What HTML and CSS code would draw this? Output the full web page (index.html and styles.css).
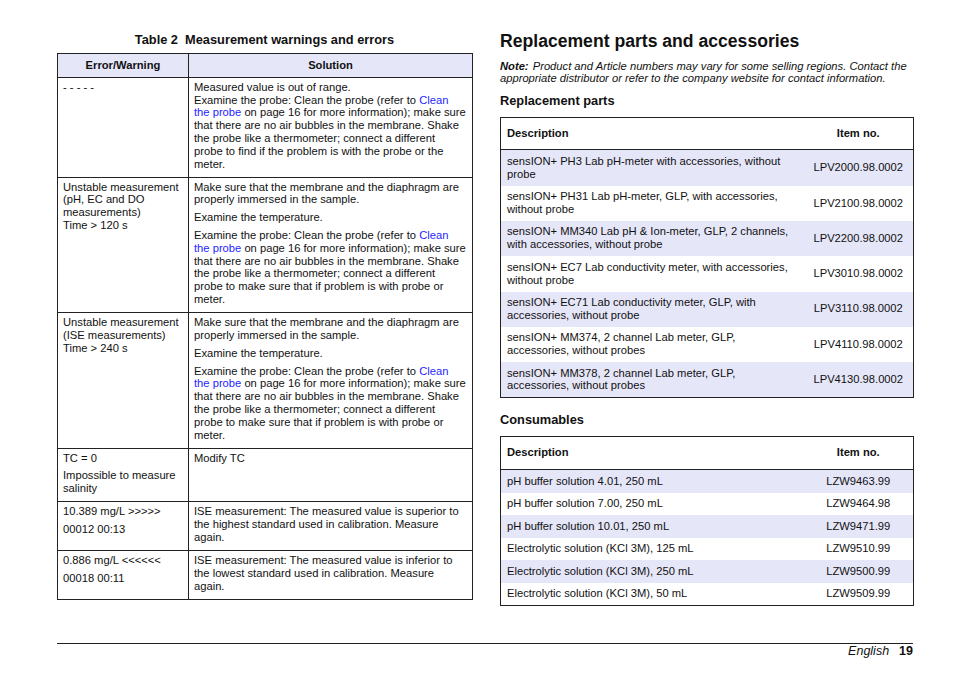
FILE: index.html
```html
<!DOCTYPE html>
<html lang="en">
<head>
<meta charset="utf-8">
<title>Replacement parts and accessories</title>
<link rel="stylesheet" href="styles.css">
</head>
<body>
<div class="page">
  <div class="columns">
    <section class="col col-left">
      <div class="caption">Table 2&nbsp;&nbsp;Measurement warnings and errors</div>
      <table class="grid">
        <colgroup><col class="c1"><col class="c2"></colgroup>
        <thead>
          <tr><th>Error/Warning</th><th>Solution</th></tr>
        </thead>
        <tbody>
          <tr>
            <td>- - - - -</td>
            <td class="sol">Measured value is out of range.<br>Examine the probe: Clean the probe (refer to <a class="lnk">Clean</a><br><a class="lnk">the probe</a> on page 16 for more information); make sure<br>that there are no air bubbles in the membrane. Shake<br>the probe like a thermometer; connect a different<br>probe to find if the problem is with the probe or the<br>meter.</td>
          </tr>
          <tr>
            <td>Unstable measurement<br>(pH, EC and DO<br>measurements)<br>Time &gt; 120 s</td>
            <td class="sol">
              <p>Make sure that the membrane and the diaphragm are<br>properly immersed in the sample.</p>
              <p>Examine the temperature.</p>
              <p>Examine the probe: Clean the probe (refer to <a class="lnk">Clean</a><br><a class="lnk">the probe</a> on page 16 for more information); make sure<br>that there are no air bubbles in the membrane. Shake<br>the probe like a thermometer; connect a different<br>probe to make sure that if problem is with probe or<br>meter.</p>
            </td>
          </tr>
          <tr>
            <td>Unstable measurement<br>(ISE measurements)<br>Time &gt; 240 s</td>
            <td class="sol">
              <p>Make sure that the membrane and the diaphragm are<br>properly immersed in the sample.</p>
              <p>Examine the temperature.</p>
              <p>Examine the probe: Clean the probe (refer to <a class="lnk">Clean</a><br><a class="lnk">the probe</a> on page 16 for more information); make sure<br>that there are no air bubbles in the membrane. Shake<br>the probe like a thermometer; connect a different<br>probe to make sure that if problem is with probe or<br>meter.</p>
            </td>
          </tr>
          <tr>
            <td><p>TC = 0</p><p>Impossible to measure<br>salinity</p></td>
            <td>Modify TC</td>
          </tr>
          <tr>
            <td><p>10.389 mg/L &gt;&gt;&gt;&gt;&gt;</p><p>00012 00:13</p></td>
            <td class="sol">ISE measurement: The measured value is superior to<br>the highest standard used in calibration. Measure<br>again.</td>
          </tr>
          <tr>
            <td><p>0.886 mg/L &lt;&lt;&lt;&lt;&lt;&lt;</p><p>00018 00:11</p></td>
            <td class="sol">ISE measurement: The measured value is inferior to<br>the lowest standard used in calibration. Measure<br>again.</td>
          </tr>
        </tbody>
      </table>
    </section>

    <section class="col col-right">
      <h1 class="title">Replacement parts and accessories</h1>
      <p class="note"><b class="note-label">Note:</b> Product and Article numbers may vary for some selling regions. Contact the appropriate distributor or refer to the company website for contact information.</p>
      <h2 class="sub">Replacement parts</h2>
      <table class="parts">
        <colgroup><col class="d"><col class="n"></colgroup>
        <thead><tr><th>Description</th><th>Item no.</th></tr></thead>
        <tbody>
          <tr><td>sensION+ PH3 Lab pH-meter with accessories, without probe</td><td>LPV2000.98.0002</td></tr>
          <tr><td>sensION+ PH31 Lab pH-meter, GLP, with accessories, without probe</td><td>LPV2100.98.0002</td></tr>
          <tr><td>sensION+ MM340 Lab pH &amp; Ion-meter, GLP, 2 channels, with accessories, without probe</td><td>LPV2200.98.0002</td></tr>
          <tr><td>sensION+ EC7 Lab conductivity meter, with accessories, without probe</td><td>LPV3010.98.0002</td></tr>
          <tr><td>sensION+ EC71 Lab conductivity meter, GLP, with accessories, without probe</td><td>LPV3110.98.0002</td></tr>
          <tr><td>sensION+ MM374, 2 channel Lab meter, GLP, accessories, without probes</td><td>LPV4110.98.0002</td></tr>
          <tr><td>sensION+ MM378, 2 channel Lab meter, GLP, accessories, without probes</td><td>LPV4130.98.0002</td></tr>
        </tbody>
      </table>
      <h2 class="sub sub2">Consumables</h2>
      <table class="parts">
        <colgroup><col class="d"><col class="n"></colgroup>
        <thead><tr><th>Description</th><th>Item no.</th></tr></thead>
        <tbody>
          <tr><td>pH buffer solution 4.01, 250 mL</td><td>LZW9463.99</td></tr>
          <tr><td>pH buffer solution 7.00, 250 mL</td><td>LZW9464.98</td></tr>
          <tr><td>pH buffer solution 10.01, 250 mL</td><td>LZW9471.99</td></tr>
          <tr><td>Electrolytic solution (KCl 3M), 125 mL</td><td>LZW9510.99</td></tr>
          <tr><td>Electrolytic solution (KCl 3M), 250 mL</td><td>LZW9500.99</td></tr>
          <tr><td>Electrolytic solution (KCl 3M), 50 mL</td><td>LZW9509.99</td></tr>
        </tbody>
      </table>
    </section>
  </div>
  <footer class="footer">
    <span class="lang">English</span><span class="pnum">19</span>
  </footer>
</div>
</body>
</html>
```

FILE: styles.css
```css
* { box-sizing: border-box; }
html, body { margin: 0; padding: 0; background: #fff; }
body {
  font-family: "Liberation Sans", Arial, sans-serif;
  color: #111;
  font-size: 11.2px;
  line-height: 12.8px;
}
.page {
  width: 954px;
  height: 673px;
  padding: 0 41px 0 57px;
}
.columns {
  display: flex;
  gap: 28px;
  height: 643px;
  padding-top: 30px;
}
.col-left { width: 415px; }
.col-right { width: 413px; }

.caption {
  font-weight: bold;
  font-size: 12.8px;
  line-height: 15px;
  text-align: center;
  margin: 2px 0 6px;
}
table { border-collapse: collapse; table-layout: fixed; }
.grid { width: 415px; border: 1px solid #222; }
.grid col.c1 { width: 131px; }
.grid col.c2 { width: 284px; }
.grid th, .grid td {
  border: 1px solid #222;
  vertical-align: top;
  text-align: left;
  padding: 3px 5px 6.3px 5px;
}
.grid td.sol { white-space: nowrap; }
.grid th {
  background: #e6e6f9;
  text-align: center;
  font-weight: bold;
  padding: 5px 5px 5px;
}
.grid p { margin: 0 0 5px; }
.grid p:last-child { margin-bottom: 0; }
.lnk { color: #1f1fff; text-decoration: none; }

.title {
  font-size: 17.6px;
  line-height: 22px;
  font-weight: bold;
  margin: 0 0 7.5px;
}
.note {
  font-style: italic;
  margin: 0 0 7.5px;
}
.note-label { margin-right: 1px; }
.sub {
  font-size: 12.8px;
  line-height: 15px;
  font-weight: bold;
  margin: 0 0 9px;
}
.sub2 { margin-top: 14px; }

.parts { width: 413px; border: 1px solid #222; }
.parts col.d { width: 303px; }
.parts col.n { width: 110px; }
.parts th {
  font-weight: bold;
  text-align: left;
  padding: 9px 6px 10px;
  border-bottom: 1px solid #222;
  background: #fff;
}
.parts th:last-child, .parts td:last-child { text-align: center; }
.parts td {
  padding: 4.5px 6px 5.2px;
  vertical-align: middle;
}
.parts tbody tr:nth-child(odd) td { background: #e6e6f9; }

.footer {
  border-top: 1px solid #222;
  display: flex;
  justify-content: flex-end;
  align-items: baseline;
  gap: 10px;
  padding-top: 0;
  font-size: 12.5px;
  line-height: 15px;
}
.lang { font-style: italic; }
.pnum { font-weight: bold; }
```
